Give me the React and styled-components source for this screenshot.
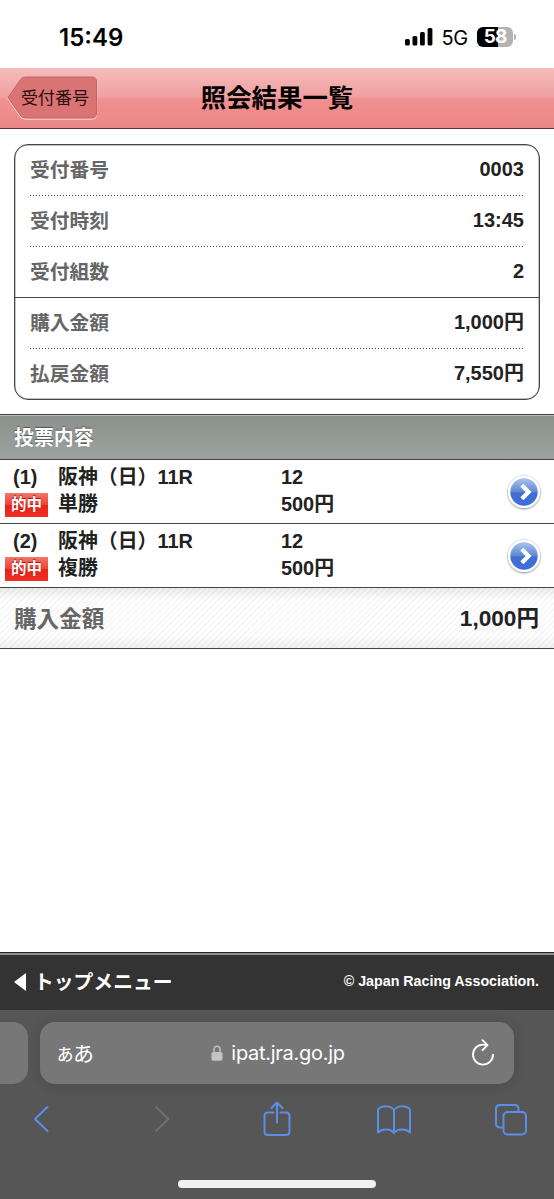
import React from "react";
import { styled, createGlobalStyle } from "styled-components";

const GlobalStyle = createGlobalStyle`
  * {
    box-sizing: border-box;
  }
  body {
    margin: 0;
    background: #fff;
    color: #222;
    font-family: "Liberation Sans", "Noto Sans CJK JP", sans-serif;
  }
`;

const Page = styled.div`
  width: 554px;
  height: 1199px;
  display: flex;
  flex-direction: column;
  overflow: hidden;
  background: #fff;
`;

const StatusBar = styled.div`
  height: 68px;
  padding: 6px 38px 0 59px;
  display: flex;
  align-items: center;
  justify-content: space-between;
  font-family: Inter, sans-serif;
  color: #000;
`;
const Clock = styled.div`
  padding-top: 1px;
  font-size: 24px;
  font-weight: 600;
  line-height: 30px;
`;
const StatusIcons = styled.div`
  display: flex;
  align-items: center;
`;
const Network = styled.span`
  margin: 1px 9px 0 9px;
  font-size: 20px;
  line-height: 24px;
  letter-spacing: -0.3px;
`;
const Battery = styled.div`
  width: 36px;
  height: 20px;
  border-radius: 6px;
  background: linear-gradient(90deg, #000 58%, #b3b3b3 58%);
  color: #fff;
  font-size: 19px;
  font-weight: 700;
  line-height: 20px;
  text-align: center;
  letter-spacing: -0.9px;
`;
const BatteryTip = styled.div`
  width: 2px;
  height: 6px;
  margin-left: 1px;
  border-radius: 0 2px 2px 0;
  background: #b3b3b3;
`;

const Header = styled.header`
  height: 61px;
  padding: 0 7px;
  display: grid;
  grid-template-columns: 92px 1fr 92px;
  align-items: center;
  border-bottom: 1px solid #5b3535;
  background: linear-gradient(#f5bcbc, #f0a0a0 48%, #f09090 52%, #ec8686);
`;
const BackButton = styled.button`
  position: relative;
  width: 92px;
  height: 44px;
  padding: 0 0 2px 14px;
  border: none;
  background: none;
  color: #2b0d0d;
  font-family: "Noto Sans CJK JP", sans-serif;
  font-size: 17px;
  line-height: 24px;
  text-align: left;
  white-space: nowrap;

  svg {
    position: absolute;
    left: 0;
    top: 0;
  }
  span {
    position: relative;
  }
`;
const Title = styled.h1`
  margin: 0;
  padding-bottom: 1px;
  color: #000;
  font-size: 25.4px;
  font-weight: bold;
  line-height: 36px;
  text-align: center;
`;

const Summary = styled.dl`
  height: 256px;
  margin: 15px 14px 14px;
  flex: none;
  border: 1px solid #444;
  border-radius: 14px;
  box-shadow: inset 0 0 0 0.5px #888;
`;
const SummaryRow = styled.div`
  height: 51px;
  padding: 0 15px;
  border-bottom: ${(props) => (props.$line === "solid" ? "1px solid #444" : "none")};
`;
const SummaryInner = styled.div`
  height: 51px;
  padding-bottom: 3px;
  display: flex;
  align-items: center;
  justify-content: space-between;
  background: ${(props) =>
    props.$line === "dotted"
      ? "repeating-linear-gradient(90deg, #444 0 1.5px, #fff 1.5px 3px) bottom / 100% 1px no-repeat"
      : "none"};
`;
const Label = styled.dt`
  padding-top: 2px;
  color: #666;
  font-size: ${(props) => props.$size || 19.8}px;
  font-weight: bold;
  line-height: 30px;
`;
const Value = styled.dd`
  margin: 0;
  font-size: ${(props) => props.$size || 20}px;
  font-weight: bold;
  line-height: 30px;
`;

const SectionTitle = styled.h2`
  height: 46px;
  margin: 0;
  padding: 1px 14px 0;
  flex: none;
  border-top: 1px solid #444;
  border-bottom: 1px solid #444;
  box-shadow: inset 0 1px 0 #b9bdb9;
  background: linear-gradient(#8b918c, #9ca29d);
  color: #fff;
  font-size: 19.9px;
  line-height: 44px;
  text-shadow: 0 -1px 1px #555;
`;

const Bet = styled.div`
  height: 64px;
  padding: 4px 12px 0 5px;
  display: grid;
  grid-template-columns: 53px 223px 1fr 36px;
  grid-template-rows: 27px 27px;
  align-items: center;
  border-bottom: 1px solid #444;
  font-size: 19.9px;
  font-weight: bold;
  line-height: 27px;
  white-space: nowrap;
`;
const BetNumber = styled.div`
  padding-left: 8px;
`;
const HitBadge = styled.div`
  width: 43px;
  height: 24px;
  background: linear-gradient(#f4766c, #f04438 48%, #ea2318 52%, #ee3024);
  color: #fff;
  font-size: 15.5px;
  line-height: 23px;
  text-align: center;
  text-shadow: 0 -1px 1px #a11;
`;
const DetailButton = styled.button`
  grid-column: 4;
  grid-row: 1 / 3;
  width: 36px;
  height: 39px;
  padding: 1px 0 0;
  border: none;
  background: none;

  svg {
    display: block;
  }
`;

const Total = styled.dl`
  height: 61px;
  margin: 0;
  padding: 2px 15px 0 14px;
  flex: none;
  display: flex;
  align-items: center;
  justify-content: space-between;
  border-bottom: 1px solid #444;
  background:
    linear-gradient(rgba(0, 0, 0, 0.08), transparent 20%, transparent 80%, rgba(0, 0, 0, 0.06)),
    repeating-linear-gradient(135deg, #fff 0 2.1px, #f7f7f7 2.1px 4.2px);
`;

const Footer = styled.footer`
  height: 58px;
  margin-top: auto;
  padding: 0 15px 0 14px;
  flex: none;
  display: flex;
  align-items: center;
  justify-content: space-between;
  border-top: 1px solid #222;
  box-shadow: inset 0 2px 0 #8d918e;
  background: #333;
  color: #fff;
  font-weight: bold;
`;
const TopMenu = styled.a`
  display: flex;
  align-items: center;
  gap: 8px;
  font-size: 19.8px;
  line-height: 30px;
`;
const Copyright = styled.small`
  padding-bottom: 1px;
  font-size: 14.25px;
`;

const Browser = styled.div`
  height: 189px;
  padding-top: 12px;
  flex: none;
  display: flex;
  flex-direction: column;
  background: #565656;
`;
const Tabs = styled.div`
  display: flex;
  gap: 12px;
`;
const PrevTab = styled.div`
  width: 28px;
  height: 62px;
  border-radius: 0 15px 15px 0;
  background: #777;
`;
const AddressBar = styled.div`
  width: 474px;
  height: 62px;
  padding: 0 19px 0 17px;
  display: grid;
  grid-template-columns: 120px 1fr 120px;
  align-items: center;
  border-radius: 15px;
  background: #777;
  box-shadow: 0 2px 14px rgba(0, 0, 0, 0.12);
  color: #fff;
`;
const Reader = styled.div`
  display: flex;
  align-items: baseline;
  margin-left: -2px;
  padding-bottom: 2px;
  font-family: "Noto Sans CJK JP", sans-serif;
  font-size: 21px;
  line-height: 30px;
`;
const SmallKana = styled.span`
  margin-right: -2px;
  font-size: 20px;
`;
const Url = styled.div`
  padding-left: 4px;
  display: flex;
  align-items: center;
  justify-content: center;
  gap: 8px;
  font-family: Inter, sans-serif;
  font-size: 20px;
  letter-spacing: -0.28px;
  white-space: nowrap;
`;
const Reload = styled.div`
  display: flex;
  justify-content: flex-end;
`;
const Toolbar = styled.nav`
  height: 70px;
  padding: 0 26px 0 24px;
  display: flex;
  align-items: center;
  justify-content: space-between;
`;
const ToolIcon = styled.svg.attrs({
  width: 34,
  height: 36,
  viewBox: "0 0 34 36",
  fill: "none",
  strokeWidth: 2,
  strokeLinecap: "round",
  strokeLinejoin: "round",
})`
  overflow: visible;
  stroke: ${(props) => (props.$disabled ? "#707070" : "#5b8eea")};
`;
const HomeBar = styled.div`
  width: 198px;
  height: 8px;
  margin: 26px auto 0;
  border-radius: 4px;
  background: #f0f0f0;
`;

const summary = [
  { label: "受付番号", value: "0003", line: "dotted" },
  { label: "受付時刻", value: "13:45", line: "dotted" },
  { label: "受付組数", value: "2", line: "solid" },
  { label: "購入金額", value: "1,000円", line: "dotted" },
  { label: "払戻金額", value: "7,550円", line: "none" },
];

const bets = [
  { id: 1, race: "阪神（日）11R", type: "単勝", horse: "12", price: "500円" },
  { id: 2, race: "阪神（日）11R", type: "複勝", horse: "12", price: "500円" },
];

function SignalIcon() {
  return (
    <svg width="28" height="18" viewBox="0 0 28 18">
      <rect x="0" y="11" width="4.8" height="6.5" rx="1.5" />
      <rect x="7.5" y="8" width="4.8" height="9.5" rx="1.5" />
      <rect x="15" y="4" width="4.8" height="13.5" rx="1.5" />
      <rect x="22.6" y="0" width="4.8" height="17.5" rx="1.5" />
    </svg>
  );
}

function CircleArrow() {
  return (
    <svg width="36" height="38" viewBox="0 0 36 38">
      <defs>
        <linearGradient id="blue" x1="0" y1="0" x2="0" y2="1">
          <stop offset="0" stopColor="#a9c3ea" />
          <stop offset="0.48" stopColor="#5f8ad8" />
          <stop offset="0.54" stopColor="#426fce" />
          <stop offset="1" stopColor="#3c6ede" />
        </linearGradient>
        <filter id="shade" x="-20%" y="-20%" width="140%" height="140%">
          <feDropShadow dx="0" dy="0.6" stdDeviation="1.1" floodOpacity="0.6" />
        </filter>
      </defs>
      <circle cx="18" cy="19" r="16" fill="#fff" filter="url(#shade)" />
      <circle cx="18" cy="19" r="13.7" fill="url(#blue)" />
      <path d="M15.8 12.3l6.8 6.7-6.8 6.7" fill="none" stroke="#fff" strokeWidth="4.2" />
    </svg>
  );
}

function App() {
  return (
    <Page>
      <GlobalStyle />
      <StatusBar>
        <Clock>15:49</Clock>
        <StatusIcons>
          <SignalIcon />
          <Network>5G</Network>
          <Battery>58</Battery>
          <BatteryTip />
        </StatusIcons>
      </StatusBar>

      <Header>
        <BackButton>
          <svg width="92" height="44" viewBox="0 0 92 44">
            <path
              d="M1 22.5L13.5 4.5Q15.5 2 18.5 2H84.5q5 0 5 5v31q0 5-5 5H18.5q-3 0-5-2.5z"
              fill="none"
              stroke="#fad0d0"
              strokeWidth="1.4"
            />
            <path
              d="M1 21.5L13.5 3.5Q15.5 1 18.5 1H84.5q5 0 5 5v31q0 5-5 5H18.5q-3 0-5-2.5z"
              fill="#da7474"
              stroke="#c46464"
            />
          </svg>
          <span>受付番号</span>
        </BackButton>
        <Title>照会結果一覧</Title>
      </Header>

      <Summary>
        {summary.map((item) => (
          <SummaryRow key={item.label} $line={item.line}>
            <SummaryInner $line={item.line}>
              <Label>{item.label}</Label>
              <Value>{item.value}</Value>
            </SummaryInner>
          </SummaryRow>
        ))}
      </Summary>

      <SectionTitle>投票内容</SectionTitle>
      {bets.map((bet) => (
        <Bet key={bet.id}>
          <BetNumber>({bet.id})</BetNumber>
          <div>{bet.race}</div>
          <div>{bet.horse}</div>
          <DetailButton>
            <CircleArrow />
          </DetailButton>
          <HitBadge>的中</HitBadge>
          <div>{bet.type}</div>
          <div>{bet.price}</div>
        </Bet>
      ))}
      <Total>
        <Label $size={22.6}>購入金額</Label>
        <Value $size={22.6}>1,000円</Value>
      </Total>

      <Footer>
        <TopMenu>
          <svg width="12" height="18" viewBox="0 0 12 18">
            <path d="M12 0v18L0 9z" fill="#fff" />
          </svg>
          トップメニュー
        </TopMenu>
        <Copyright>© Japan Racing Association.</Copyright>
      </Footer>

      <Browser>
        <Tabs>
          <PrevTab />
          <AddressBar>
            <Reader>
              <SmallKana>ぁ</SmallKana>あ
            </Reader>
            <Url>
              <svg width="12" height="16" viewBox="0 0 12 16">
                <path d="M3 8V4.2a3 3 0 016 0V8" fill="none" stroke="#c3c3c8" strokeWidth="1.4" />
                <rect x="0.5" y="7" width="11" height="8.7" rx="1.8" fill="#c3c3c8" />
              </svg>
              ipat.jra.go.jp
            </Url>
            <Reload>
              <svg
                width="24"
                height="28"
                viewBox="0 0 24 28"
                fill="none"
                stroke="#fff"
                strokeWidth="1.9"
                strokeLinecap="round"
                strokeLinejoin="round"
              >
                <path d="M16 6.2Q14 5.6 12 5.6a10 10 0 1010 10" />
                <path d="M11.5 1.2l5 5-5 5" />
              </svg>
            </Reload>
          </AddressBar>
        </Tabs>
        <Toolbar>
          <ToolIcon>
            <path d="M23.5 6L11 18l12.5 12" />
          </ToolIcon>
          <ToolIcon $disabled>
            <path d="M14 6l12.5 12L14 30" />
          </ToolIcon>
          <ToolIcon>
            <path d="M14.5 11.5H9q-3.5 0-3.5 3.5v15.5q0 3.5 3.5 3.5h18q3.5 0 3.5-3.5V15q0-3.5-3.5-3.5h-5.5" />
            <path d="M18 21.5V1.5M12.5 7L18 1.5 23.5 7" />
          </ToolIcon>
          <ToolIcon>
            <path d="M17 9v23M17 9C14 4.5 4.5 4 1 8.5v23c4-4 12.5-4 16 .5 3.5-4.5 12-4.5 16-.5v-23C29.5 4 20 4.5 17 9z" />
          </ToolIcon>
          <ToolIcon>
            <rect x="9.5" y="11" width="22.5" height="22.5" rx="4" />
            <path d="M9.5 26.5H6q-4 0-4-4V8q0-4 4-4h14.5q4 0 4 4v3" />
          </ToolIcon>
        </Toolbar>
        <HomeBar />
      </Browser>
    </Page>
  );
}
export default App;
